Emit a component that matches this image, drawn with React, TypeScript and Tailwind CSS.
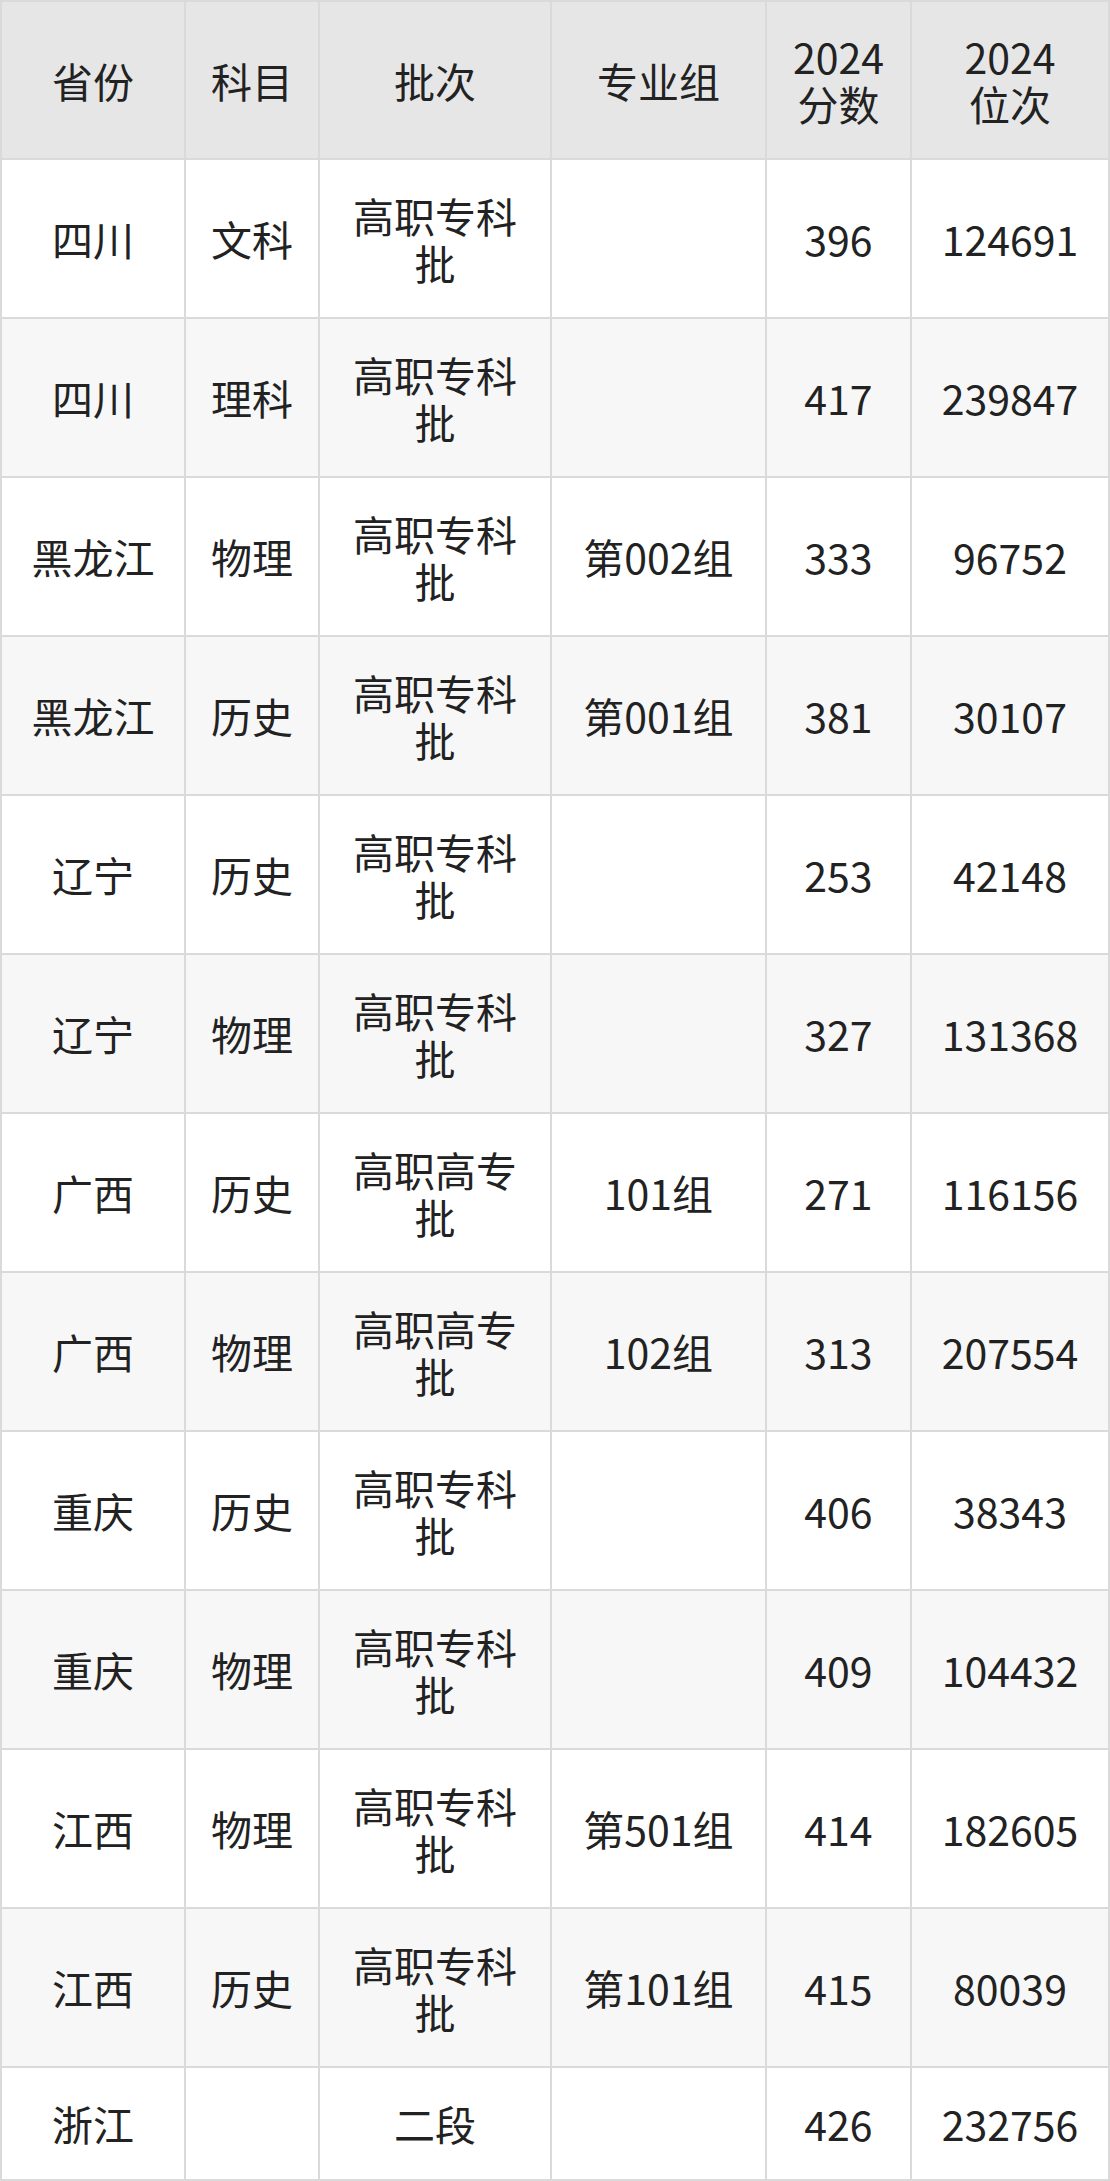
import React from "react";

type Row = [string, string, string, string, string, string];

const rows: Row[] = [
  ["四川", "文科", "高职专科批", "", "396", "124691"],
  ["四川", "理科", "高职专科批", "", "417", "239847"],
  ["黑龙江", "物理", "高职专科批", "第002组", "333", "96752"],
  ["黑龙江", "历史", "高职专科批", "第001组", "381", "30107"],
  ["辽宁", "历史", "高职专科批", "", "253", "42148"],
  ["辽宁", "物理", "高职专科批", "", "327", "131368"],
  ["广西", "历史", "高职高专批", "101组", "271", "116156"],
  ["广西", "物理", "高职高专批", "102组", "313", "207554"],
  ["重庆", "历史", "高职专科批", "", "406", "38343"],
  ["重庆", "物理", "高职专科批", "", "409", "104432"],
  ["江西", "物理", "高职专科批", "第501组", "414", "182605"],
  ["江西", "历史", "高职专科批", "第101组", "415", "80039"],
  ["浙江", "", "二段", "", "426", "232756"],
];

const font = { fontFamily: '"Noto Sans CJK SC", "Noto Sans", sans-serif' };

export default function App() {
  return (
    <div className="w-[1110px] bg-white" style={font}>
      <div className="grid grid-cols-[182px_132px_230px_213px_143px_196px] gap-[2px] bg-[#dadada] p-[2px] text-[41px] leading-[47px] text-[#222222]">
        {[
          "省份",
          "科目",
          "批次",
          "专业组",
          <>2024<br />分数</>,
          <>2024<br />位次</>,
        ].map((h, i) => (
          <div
            key={"h" + i}
            className="flex h-[156px] items-center justify-center bg-[#e6e6e6] px-4 text-center"
          >
            <div>{h}</div>
          </div>
        ))}
        {rows.map((r, ri) => {
          const bg = ri % 2 === 0 ? "bg-white" : "bg-[#f7f7f7]";
          const h = ri === rows.length - 1 ? "h-[111px]" : "h-[157px]";
          return r.map((c, ci) => (
            <div
              key={ri + "-" + ci}
              className={`flex items-center justify-center px-4 text-center ${bg} ${h}`}
            >
              <div>{c}</div>
            </div>
          ));
        })}
      </div>
    </div>
  );
}
